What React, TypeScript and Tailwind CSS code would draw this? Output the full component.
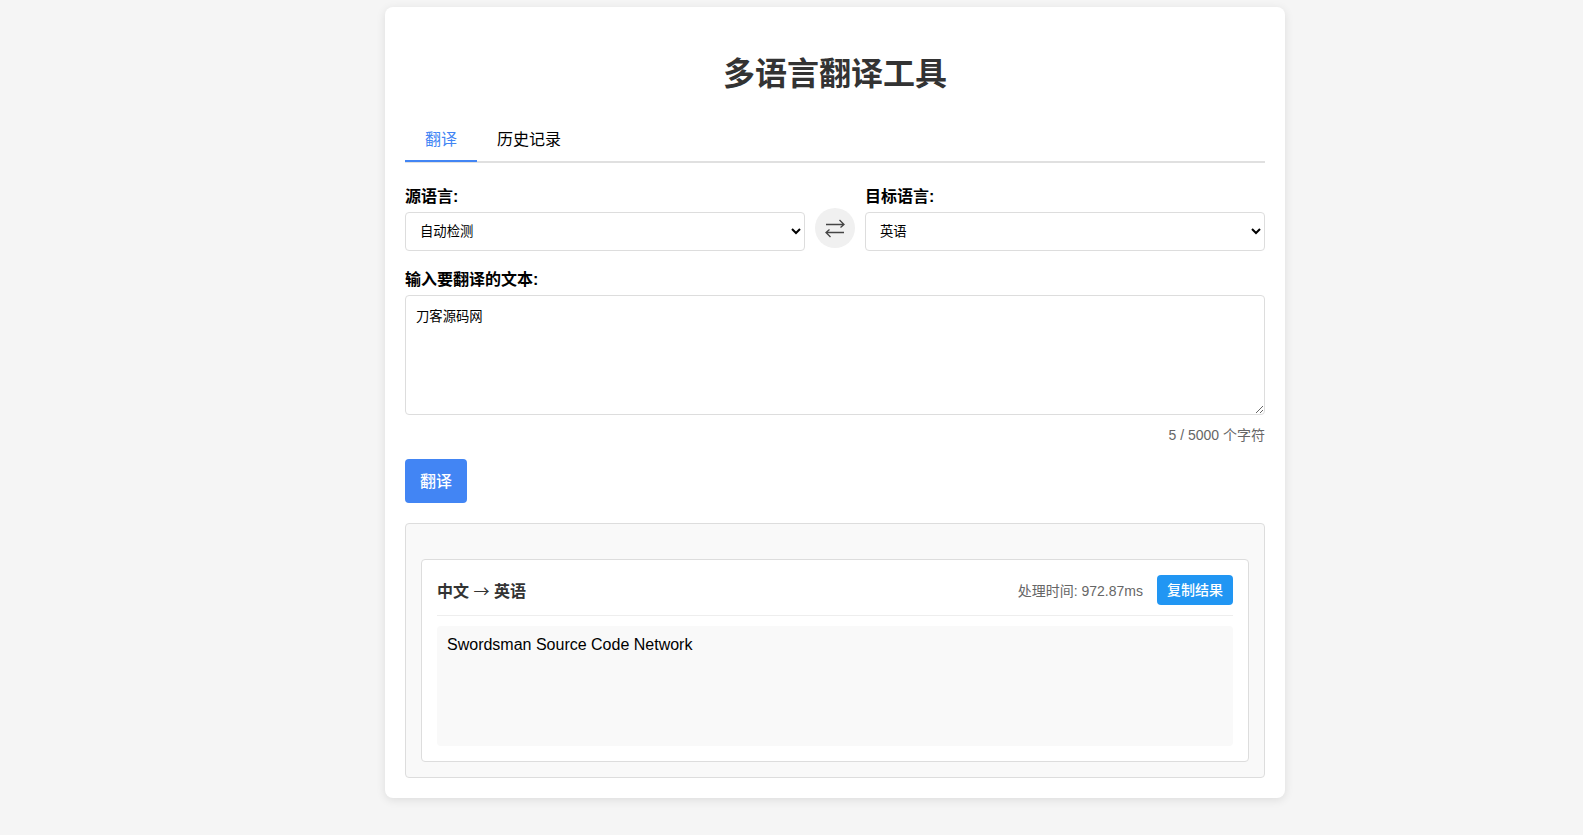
const font = "font-['Liberation_Sans','Noto_Sans_CJK_SC',sans-serif]";

export default function App() {
  return (
    <div className={`min-h-[835px] overflow-hidden bg-[#f5f5f5] pt-[7px] text-black ${font}`}>
      <div className="ml-[385px] w-[900px] rounded-lg bg-white p-5 shadow-[0_2px_10px_rgba(0,0,0,0.1)]">
        <h1 className="mb-[25px] mt-[25px] text-center text-[32px] font-bold leading-[44px] text-[#333]">多语言翻译工具</h1>
        <div className="mb-[25px] flex border-b-2 border-[#e0e0e0]">
          <button className="-mb-px border-b-2 border-[#4285f4] px-5 pb-[11px] pt-[9px] text-base leading-[19px] text-[#4285f4]">翻译</button>
          <button className="-mb-px border-b-2 border-transparent px-5 pb-[11px] pt-[9px] text-base leading-[19px]">历史记录</button>
        </div>
        <div className="mb-5 flex items-end gap-[10px]">
          <div className="flex-1">
            <label className="mb-[7px] block text-base font-bold leading-[17px]">源语言:</label>
            <select defaultValue="auto" className="block h-[39px] w-full rounded border border-[#ddd] bg-white pl-[10px] text-[13.33px]">
              <option value="auto">自动检测</option>
            </select>
          </div>
          <button className="mb-[3px] flex h-10 w-10 items-center justify-center rounded-full bg-[#f0f0f0] text-[#444]">
            <svg width="40" height="40" viewBox="0 0 40 40" fill="none" stroke="currentColor" strokeWidth="1.3">
              <path d="M11 16.5h18M24.5 12l4.5 4.5-3.5 3M29 24.5H11M15.5 29 11 24.5l3.5-3" />
            </svg>
          </button>
          <div className="flex-1">
            <label className="mb-[7px] block text-base font-bold leading-[17px]">目标语言:</label>
            <select defaultValue="en" className="block h-[39px] w-full rounded border border-[#ddd] bg-white pl-[10px] text-[13.33px]">
              <option value="en">英语</option>
            </select>
          </div>
        </div>
        <label className="mb-[7px] block text-base font-bold leading-[17px]">输入要翻译的文本:</label>
        <textarea
          defaultValue="刀客源码网"
          className="block h-[120px] w-full rounded border border-[#ddd] px-[10px] pb-[9px] pt-[11px] text-[13.33px]"
        />
        <div className="mt-[10px] text-right text-sm leading-[20px] text-[#666]">5 / 5000 个字符</div>
        <button className="mb-5 mt-[14px] block h-11 w-[62px] rounded bg-[#4285f4] pt-[2px] text-base font-medium text-white">翻译</button>
        <div className="rounded border border-[#ddd] bg-[#f9f9f9] p-[15px] pt-[35px]">
          <div className="rounded border border-[#ddd] bg-white p-[15px]">
            <div className="mb-[10px] flex items-center justify-between border-b border-[#eee] pb-[10px]">
              <span className="pt-[2px] text-base font-bold leading-[22px] text-[#333]">中文 <span className="font-['Noto_Sans_CJK_SC'] font-normal">→</span> 英语</span>
              <div className="flex items-center gap-[14px]">
                <span className="pt-[2px] text-sm text-[#666]">处理时间: 972.87ms</span>
                <button className="h-[30px] w-[76px] rounded bg-[#2196f3] text-sm font-medium text-white">复制结果</button>
              </div>
            </div>
            <div className="h-[120px] rounded bg-[#f9f9f9] p-[10px] text-base leading-[18px]">Swordsman Source Code Network</div>
          </div>
        </div>
      </div>
    </div>
  );
}
